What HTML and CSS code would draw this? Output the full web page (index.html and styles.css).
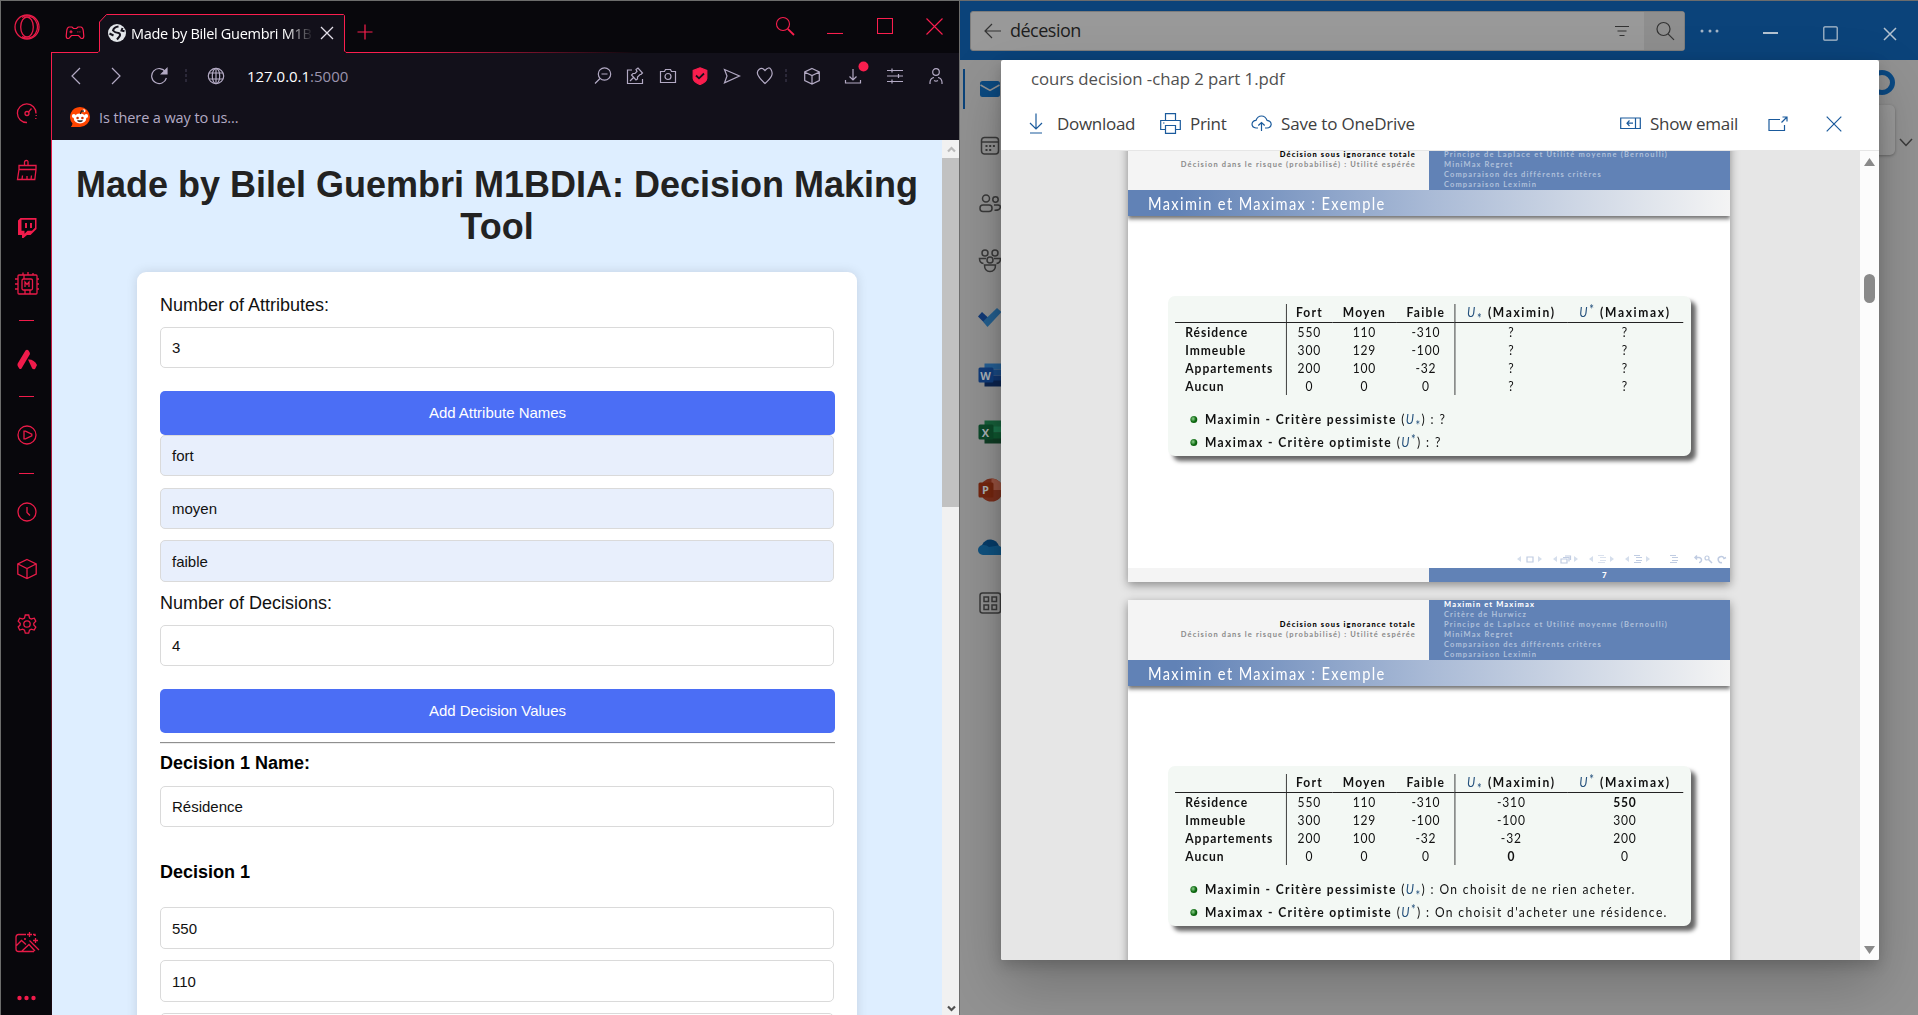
FILE: index.html
```html
<!DOCTYPE html>
<html lang="en">
<head>
<meta charset="utf-8">
<title>Decision Making Tool</title>
<link rel="stylesheet" href="styles.css">
</head>
<body>
<div class="desktop">

<section class="browser">
  <aside class="gx-rail">
    <div class="slot slot-logo"><svg width="26" height="26" viewBox="0 0 26 26"><circle cx="13" cy="13" r="12"/><ellipse cx="13" cy="13" rx="6.3" ry="10"/><path d="M8 3.4C12 .5 19 2 21.5 6.500c2.500 4 2.500 9 0 13C19 24 12 25.500 8 22.600"/></svg></div>
    <div class="slot first"><svg width="24" height="24" viewBox="0 0 24 24"><path d="M12 21.500a9.300 9.300 0 1 1 9-9"/><path d="M21.200 14v1M20.800 17v1"/><circle cx="12" cy="12.500" r="2"/><path d="M13.500 11 16.500 7.500"/></svg></div>
    <div class="slot"><svg width="24" height="24" viewBox="0 0 24 24"><path d="M9.500 7V4q0-1.500 1.800-1.500T13 4v3M4 7.500h17v4H4zM4 11.500 2.500 21.500h17.300l1.200-10M7 21.500l.5-4M12 21.500v-3.500M16 21.500l.5-4"/></svg></div>
    <div class="slot"><svg width="24" height="24" viewBox="0 0 24 24"><path class="solid" d="M3 5.500 5.500 3h16v11l-6 6H12l-3.500 3H7v-3H3zM6.500 4.800v11H9.500v3l3-3H17l3-3V4.800z" fill-rule="evenodd"/><path d="M11 8v5M16 8v5" stroke-width="2"/></svg></div>
    <div class="slot"><svg width="26" height="26" viewBox="0 0 26 26"><rect x="4" y="4" width="19" height="19" rx="1"/><rect x="8" y="8" width="10.500" height="11" rx="1.500"/><path d="M11 16v-5l2 2.500 2-2.500v5M9 4V1.500M14 4V1M19 4V2M1 8h3M1 13h3M1 18h3M23 8h2M23 13h2M23 18h2M10 4v4M11 19v4M16 19v4"/></svg></div>
    <div class="dash"></div>
    <div class="slot tall"><svg width="24" height="24" viewBox="0 0 24 24"><path class="solid" d="M10.500 3.500q1.500-1.500 3 0t1.500 3.500L6.500 21.500q-1 1-2.300 0L2.700 19q-.5-1.500 0-2.500zM13 12.500q6-.5 9 5.500l-1.800 3.700q-1.500 1.300-3-.2z"/></svg></div>
    <div class="dash"></div>
    <div class="slot tall"><svg width="24" height="24" viewBox="0 0 24 24"><circle cx="12" cy="12" r="9"/><path d="M9 8.200v7.600h1.500l6.300-3v-1.600l-6.300-3z"/></svg></div>
    <div class="dash"></div>
    <div class="slot tall"><svg width="24" height="24" viewBox="0 0 24 24"><circle cx="12" cy="12" r="9"/><path d="M12 7v5.500l3 3"/></svg></div>
    <div class="slot cube"><svg width="24" height="24" viewBox="0 0 24 24"><path d="M12 2.500 21.200 7v10L12 21.500 2.800 17V7zM3 7l9 4.500L21 7M12 11.500v10"/></svg></div>
    <div class="slot"><svg width="24" height="24" viewBox="0 0 24 24"><path d="M10.300 3h3.400l.8 3 1.800 1 3-.8 1.500 3-2 2v1.800l2 2-1.600 3-3-.9-1.700 1-.8 3h-3.400l-.8-3-1.800-1-3 .9-1.500-3 2-2v-1.800l-2-2 1.500-3 3 .8 1.800-1z"/><circle cx="12" cy="12" r="3.200"/></svg></div>
    <div class="slot picture"><svg width="26" height="26" viewBox="0 0 26 26"><path d="M12 4.500H4.500Q2 4.500 2 7v12q0 2.500 2.500 2.500H20M2.500 15.500l5-5 4.500 4M8 21l7-6.500 6 6.500M15.500 10.500 25 20M21 6v-.8"/><path d="M15.500 2v5M13 4.500h5M21.500 8v5M19 10.500h5M21 6V4.500h-2"/><circle cx="11" cy="9" r="1" class="solid"/></svg></div>
    <div class="slot more"><svg width="24" height="6" viewBox="0 0 24 6"><g class="solid"><circle cx="4.500" cy="3" r="2.200"/><circle cx="11.500" cy="3" r="2.200"/><circle cx="18.500" cy="3" r="2.200"/></g></svg></div>
  </aside>

  <div class="gx-main">
    <header class="tabs">
      <svg class="tab-outline" width="908" height="52" viewBox="0 0 908 52">
        <defs><linearGradient id="fade" gradientUnits="userSpaceOnUse" x1="0" y1="0" x2="590" y2="0"><stop offset="0" stop-color="#fa1e4e"/><stop offset=".58" stop-color="#fa1e4e"/><stop offset="1" stop-color="#fa1e4e" stop-opacity="0"/></linearGradient></defs>
        <path class="tab-fill" d="M48 52V21l7-7h238v38z"/>
        <path d="M0 51.500h47l1.500-1.500V21l7-7.500h237l1 1V50l1.500 1.500h300" stroke="url(#fade)" fill="none"/>
      </svg>
      <svg width="20" height="16" viewBox="0 0 20 16"><path d="M4 2h3l1.500 1.500h3L13 2h3q2 .5 2.300 4l.5 5q0 2.500-1.800 2.500-1.200 0-2-1.300L13.500 10.500h-7L5 12.200q-.8 1.300-2 1.300-1.800 0-1.800-2.500l.5-5Q2 2.500 4 2zM4.500 6.800h3M6 5.300v3M12.500 6.800h.8M14.500 6.800h.8" /></svg>
      <div class="tab">
        <svg width="20" height="20" viewBox="0 0 20 20"><circle cx="10" cy="10" r="9" fill="#e3e6ea" stroke="none"/><path d="M11.500 3.500Q7 4 6 7.500q2 2.500 5.500 2.500 2.500 1 1 3.500l-2.500 3M15.500 5l-1 2.500 3 .8M2.500 10.500l4 2" stroke="#15131d" stroke-width="2"/></svg>
        <span class="tab-title">Made by Bilel Guembri M1B</span>
        <svg width="14" height="14" viewBox="0 0 14 14"><path d="M1 1l12 12M13 1L1 13" stroke="#e4e0ea" stroke-width="1.300"/></svg>
      </div>
      <svg class="plus" width="16" height="16" viewBox="0 0 16 16"><path d="M8 .5v15M.5 8h15"/></svg>
      <span></span>
      <svg class="win" width="20" height="20" viewBox="0 0 20 20"><circle cx="8" cy="8" r="6.500"/><path d="M12.800 12.800 19 19" stroke-width="1.800"/></svg>
      <svg class="win" width="16" height="16" viewBox="0 0 16 16"><path d="M0 15.500h16"/></svg>
      <svg class="win" width="16" height="16" viewBox="0 0 16 16"><path d="M.5.500h15v15H.5z"/></svg>
      <svg class="win" width="17" height="17" viewBox="0 0 17 17"><path d="M.5.500l16 16M16.500.500l-16 16"/></svg>
    </header>

    <div class="gx-body">
      <nav class="toolbar">
        <svg width="18" height="18" viewBox="0 0 18 18"><path d="M13 1 5 9l8 8"/></svg>
        <svg width="18" height="18" viewBox="0 0 18 18"><path d="M5 1l8 8-8 8"/></svg>
        <svg width="18" height="18" viewBox="0 0 18 18"><path d="M15.500 5A7.500 7.500 0 1 0 16.400 11"/><path d="M17 1.500V7h-5.500z" fill="#b3aac4"/></svg>
        <i class="dots"></i>
        <svg width="18" height="18" viewBox="0 0 18 18"><circle cx="9" cy="9" r="7.700"/><ellipse cx="9" cy="9" rx="3.700" ry="7.700"/><path d="M2 6h14M2 12h14M9 1.500v15"/></svg>
        <span class="address">127.0.0.1<span>:5000</span></span>
        <svg width="18" height="18" viewBox="0 0 18 18"><circle cx="10.500" cy="7" r="6.200"/><path d="M7.500 7h6M6 11.500 1 16.500"/></svg>
        <svg width="18" height="18" viewBox="0 0 18 18"><path d="M6 3H1.500v13.500h15V12M10 2.500 12 1l4.500 5-1.500 1.500-1 0-2.500 2.500v2L10 13 5.500 8 7 6.500l2 .0L11 4.500zM7.500 10.500 4 14"/></svg>
        <svg width="18" height="18" viewBox="0 0 18 18"><path d="M1.500 4.500h4l1-2h5l1 2h4v11h-15z"/><circle cx="9" cy="9.500" r="3"/></svg>
        <svg width="18" height="18" viewBox="0 0 18 18"><path d="M9 .8 15.800 3.500v8Q15.500 15 9 17.600 2.500 15 2.200 11.500v-8z" fill="#fa1e4e" stroke="#fa1e4e"/><path d="M5 8.500 8 11.300 13 6.500" stroke="#12101a" stroke-width="1.800"/></svg>
        <svg width="18" height="18" viewBox="0 0 18 18"><path d="M1.500 2.500 16.500 9 1.500 15.800 4 9z"/></svg>
        <svg width="18" height="18" viewBox="0 0 18 18"><path d="M9 3.500Q6 0 3 2.500T2.500 9Q4 12 9 16.500 14 12 15.500 9T15 2.500 9 3.500z"/></svg>
        <i class="dots"></i>
        <svg width="18" height="18" viewBox="0 0 18 18"><path d="M9 1.500 16.300 5v8.500L9 17l-7.300-3.500V5zM2 5.200l7 3.300 7-3.300M9 8.500V17"/></svg>
        <svg class="download" width="18" height="18" viewBox="0 0 18 18"><path d="M9 2v11M5.500 9.500 9 13l3.500-3.500M1.500 13v3h15v-3"/><circle cx="19.500" cy="-.5" r="5" fill="#fa1e4e" stroke="none"/></svg>
        <svg width="18" height="18" viewBox="0 0 18 18"><path d="M1 3.500h16M1 9h16M1 14.500h16M6 1.500v4M12.500 7v4M6 12.500v4"/></svg>
        <svg width="18" height="18" viewBox="0 0 18 18"><circle cx="9" cy="5" r="3.300"/><path d="M3 17v-2q.5-4 4-4.500M15 17v-2q-.5-4-4-4.500M7 13.500q2 1.200 4 0" /></svg>
      </nav>
      <div class="bookmarks">
        <svg width="20" height="20" viewBox="0 0 20 20"><path d="M10 0a10 10 0 1 1 0 20H.8q1.400-1.500 1.700-3.500A10 10 0 0 1 10 0z" fill="#ff4500" stroke="none"/><g fill="#fff" stroke="none"><ellipse cx="10" cy="11.500" rx="6.200" ry="5"/><circle cx="3.800" cy="9" r="1.900"/><circle cx="16.200" cy="9" r="1.900"/><circle cx="14" cy="3.800" r="1.500"/></g><path d="M10.300 7 11.500 4l2.500.2" stroke="#222"/><circle cx="7.600" cy="11" r="1.300" fill="#d33000" stroke="none"/><circle cx="12.400" cy="11" r="1.300" fill="#d33000" stroke="none"/><path d="M7.500 13.800q2.500 2 5 0z" fill="#222" stroke="#222" stroke-width=".8"/></svg>
        <span>Is there a way to us...</span>
      </div>

      <div class="viewport">
        <main class="page">
          <h1>Made by Bilel Guembri M1BDIA: Decision Making Tool</h1>
          <form class="card">
            <label>Number of Attributes:</label>
            <div class="field">3</div>
            <div class="button">Add Attribute Names</div>
            <div class="field filled">fort</div>
            <div class="field filled">moyen</div>
            <div class="field filled last">faible</div>
            <label>Number of Decisions:</label>
            <div class="field">4</div>
            <div class="button">Add Decision Values</div>
            <hr>
            <label class="strong">Decision 1 Name:</label>
            <div class="field name">Résidence</div>
            <h3>Decision 1</h3>
            <div class="field value">550</div>
            <div class="field value">110</div>
            <div class="field value"></div>
          </form>
        </main>
        <div class="scroll">
          <div class="scroll-up"><svg width="9" height="7" viewBox="0 0 9 7"><path d="M1 5.500 4.500 2 8 5.500" stroke="#b9b9b9" stroke-width="2.200"/></svg></div>
          <div class="scroll-thumb"></div>
          <div class="scroll-down"><svg width="9" height="7" viewBox="0 0 9 7"><path d="M1 1.500 4.500 5 8 1.500" stroke="#505050" stroke-width="2.200"/></svg></div>
        </div>
      </div>
    </div>
  </div>
</section>

<section class="mail">
  <header class="mail-head">
    <div class="search">
      <svg width="18" height="16" viewBox="0 0 18 16"><path d="M17 8H1M8 1 1 8l7 7"/></svg>
      <span>décesion</span>
      <svg width="16" height="12" viewBox="0 0 16 12"><path d="M1 1.500h14M3.500 6h9M5.500 10.500h5"/></svg>
      <div class="search-go"><svg width="20" height="20" viewBox="0 0 20 20"><circle cx="8.500" cy="8" r="6.500"/><path d="M13 12.800l6 6"/></svg></div>
    </div>
    <svg width="20" height="6" viewBox="0 0 20 6"><g fill="#a5b5c6" stroke="none"><circle cx="2" cy="3" r="1.500"/><circle cx="10" cy="3" r="1.500"/><circle cx="17" cy="3" r="1.500"/></g></svg>
    <svg class="min" width="15" height="14" viewBox="0 0 15 14"><path d="M0 7h15" stroke-width="2"/></svg>
    <svg class="max" width="15" height="15" viewBox="0 0 15 15"><rect x=".8" y=".8" width="13.400" height="13.400" rx="1"/></svg>
    <svg class="cls" width="14" height="14" viewBox="0 0 14 14"><path d="M1 1l12 12M13 1 1 13" stroke-width="1.500"/></svg>
  </header>
  <div class="mail-body">
    <nav class="apps">
      <div class="active"><svg width="24" height="24" viewBox="0 0 24 24"><rect x="2" y="4" width="20" height="16" rx="2.500" fill="#0c4a80"/><path d="M2.500 8 12 13.500 21.500 8" stroke="#929292" stroke-width="1.500" fill="none"/></svg></div>
      <div><svg width="24" height="24" viewBox="0 0 24 24" class="line"><rect x="3.500" y="3.500" width="17" height="16.500" rx="3"/><path d="M3.500 8h17"/><path d="M7.500 12h9.500M7.500 16h6" stroke-dasharray="2 1.700" stroke-width="2"/></svg></div>
      <div><svg width="24" height="24" viewBox="0 0 24 24" class="line"><circle cx="8" cy="7.500" r="3.500"/><circle cx="17.500" cy="8.500" r="2.700"/><rect x="2" y="14" width="12" height="6.500" rx="3"/><path d="M16 14h4q2.500 0 2.300 2.500-.8 3-5.800 2.800"/></svg></div>
      <div><svg width="24" height="26" viewBox="0 0 24 26" class="line"><circle cx="7" cy="5" r="3"/><circle cx="17" cy="5" r="3"/><circle cx="12" cy="12" r="3"/><path d="M6.500 17h11q0 6.500-5.500 6.500T6.500 17zM8 10.500H1.500q0 4.500 4 5M16 10.500h6.500q0 4.500-4 5"/></svg></div>
      <div><svg width="26" height="22" viewBox="0 0 26 22"><path d="M1 9.500 5 5l6 5.500L10.500 19z" fill="#123a77"/><path d="M6 14.500 20 1l4.500 4L10.500 20z" fill="#245f8f"/></svg></div>
      <div class="office"><svg width="24" height="24" viewBox="0 0 24 24"><path d="M6.500.500H24v6H6.500z" fill="#265f94"/><path d="M6.500 6.500H24v6H6.500z" fill="#1a4a84"/><path d="M6.500 12.500H24v6H6.500z" fill="#113670"/><path d="M6.500 17.500H24v6H6.500z" fill="#0b244f"/><rect x=".5" y="4.500" width="15" height="15" rx="1.500" fill="#113c7a"/></svg><b>W</b></div>
      <div class="office"><svg width="24" height="24" viewBox="0 0 24 24"><path d="M6.500.500H24v12H6.500z" fill="#17603b"/><path d="M15 6.500h9v6h-9z" fill="#1d754b"/><path d="M6.500 12.500H24v11H6.500z" fill="#103d25"/><path d="M15 12.500h9v6h-9z" fill="#0f5830"/><rect x=".5" y="4.500" width="15" height="15" rx="1.500" fill="#0c4a2a"/></svg><b>X</b></div>
      <div class="office"><svg width="24" height="24" viewBox="0 0 24 24"><circle cx="13.500" cy="12" r="11.500" fill="#7a2f1c"/><path d="M13.500.500A11.500 11.500 0 0 1 25 12H13.500z" fill="#985240"/><rect x=".5" y="4.500" width="15" height="15" rx="1.500" fill="#74260f"/></svg><b>P</b></div>
      <div><svg width="24" height="18" viewBox="0 0 24 18"><path d="M4 7Q7 1 13 1.500t8 7L10 15 3 13z" fill="#063c69"/><path d="M5 17a5 5 0 0 1 0-10q3-.5 6 2l9-1.500Q26 9 25 17z" fill="#0f5280"/></svg></div>
      <div class="grid-app"><svg width="24" height="24" viewBox="0 0 24 24" class="line"><rect x="2" y="2" width="20.500" height="20" rx="2.500"/><path d="M6 6h4.500v4.500H6zM14 6h4.500v4.500H14zM6 14h4.500v4.500H6zM14 14h4.500v4.500H14z"/></svg></div>
    </nav>
    <div class="peek">
      <div class="ring"></div>
      <div class="peek-row"><div class="peek-card"></div><svg width="14" height="9" viewBox="0 0 14 9" class="line"><path d="M1 1l6 6.500L13 1"/></svg></div>
    </div>
  </div>

  <div class="dialog">
    <div class="file-name">cours decision -chap 2 part 1.pdf</div>
    <div class="commands">
      <svg class="c-down" width="14" height="21" viewBox="0 0 14 21"><path d="M7 .5v15M1 10l6 6 6-6M1 20h12"/></svg><span class="t-down">Download</span>
      <svg class="c-print" width="21" height="21" viewBox="0 0 21 21"><path d="M5.500 7.500V.7h10v6.800M5 16.500H.7v-9h19.600v9H16M5.500 12.500h10v7.800h-10zM3 10h1.500"/></svg><span class="t-print">Print</span>
      <svg class="c-save" width="21" height="17" viewBox="0 0 21 17"><path d="M7 13H5q-4-.5-4-4 .5-3.500 4-3.700Q6.500 1 10.500 1t5.500 4.300q4 .5 4.200 4-.5 3.500-4.200 3.700h-2M10.500 16V7.500M7.300 10.500l3.200-3 3.200 3"/></svg><span class="t-save">Save to OneDrive</span>
      <span class="space"></span>
      <svg class="c-show" width="21" height="13" viewBox="0 0 21 13"><path d="M.7 1h19.600v10.500H.7zM15.500 1v10.500M13 6.200H7M9.500 3.500 7 6.200 9.500 9"/></svg><span class="t-show">Show email</span>
      <svg class="c-pop" width="20" height="16" viewBox="0 0 20 16"><path d="M12 3.500H1v11h15.500V9M13.500 6.500 19 1M14.500 1H19v4.500"/></svg>
      <svg class="c-close" width="16" height="16" viewBox="0 0 16 16"><path d="M.7.700l14.600 14.600M15.300.700.7 15.300"/></svg>
    </div>

    <div class="viewer">
      <div class="slides">
        <article class="slide">
          <div class="outline">
            <div class="sections"><p class="on">Décision sous ignorance totale</p><p class="s2">Décision dans le risque (probabilisé) : Utilité espérée</p></div>
            <div class="subs"><p></p><p></p><p class="wide">Principe de Laplace et Utilité moyenne (Bernoulli)</p><p>MiniMax Regret</p><p>Comparaison des différents critères</p><p>Comparaison Leximin</p></div>
          </div>
          <h2><span>Maximin et Maximax : Exemple</span></h2>
          <div class="block">
            <div class="table">
              <b></b><b>Fort</b><b>Moyen</b><b>Faible</b><b><em>U</em><sub>*</sub> (Maximin)</b><b><em>U</em><sup>*</sup> (Maximax)</b>
              <b>Résidence</b><span>550</span><span>110</span><span>-310</span><span>?</span><span>?</span>
              <b>Immeuble</b><span>300</span><span>129</span><span>-100</span><span>?</span><span>?</span>
              <b>Appartements</b><span>200</span><span>100</span><span>-32</span><span>?</span><span>?</span>
              <b>Aucun</b><span>0</span><span>0</span><span>0</span><span>?</span><span>?</span>
            </div>
            <ul>
              <li><b>Maximin - Critère pessimiste</b> (<em>U</em><sub>*</sub>) : ?</li>
              <li><b>Maximax - Critère optimiste</b> (<em>U</em><sup>*</sup>) : ?</li>
            </ul>
          </div>
          <div class="controls"><svg width="214" height="12" viewBox="0 0 214 12">
            <g fill="#d5deec" stroke="none"><path d="M3 6l4-3v6zM28 6l-4-3v6zM39 6l4-3v6zM64 6l-4-3v6zM75 6l4-3v6zM100 6l-4-3v6zM111 6l4-3v6zM136 6l-4-3v6z"/></g>
            <g fill="none" stroke="#c0cce2"><path d="M13 4h6v5h-6zM47 6h6v4h-6zM49 4.500h6v4M51 3h5.500v4"/><path d="M84 2.500h6M86 4.500h6M86 7.500h6M84 9.500h7" stroke="#dbe2ee"/><path d="M120 2.500h6M122 4.500h6M122 7.500h6M120 9.500h7M156 2.500h6M158 4.500h6M158 7.500h6M156 9.500h7"/><path d="M181 4.500h4a2.500 2.500 0 1 1 0 5M183 2.500l-2 2 2 2M208 9.500a3 3 0 1 1 2-4l2-1M194.500 6.500l3.500 3.500" stroke-width="1.500"/><circle cx="193" cy="5" r="2"/></g></svg></div>
          <footer><span></span><span>7</span></footer>
        </article>

        <article class="slide">
          <div class="outline">
            <div class="sections"><p class="on">Décision sous ignorance totale</p><p class="s2">Décision dans le risque (probabilisé) : Utilité espérée</p></div>
            <div class="subs"><p class="on">Maximin et Maximax</p><p>Critère de Hurwicz</p><p class="wide">Principe de Laplace et Utilité moyenne (Bernoulli)</p><p>MiniMax Regret</p><p>Comparaison des différents critères</p><p>Comparaison Leximin</p></div>
          </div>
          <h2><span>Maximin et Maximax : Exemple</span></h2>
          <div class="block">
            <div class="table">
              <b></b><b>Fort</b><b>Moyen</b><b>Faible</b><b><em>U</em><sub>*</sub> (Maximin)</b><b><em>U</em><sup>*</sup> (Maximax)</b>
              <b>Résidence</b><span>550</span><span>110</span><span>-310</span><span>-310</span><span><strong>550</strong></span>
              <b>Immeuble</b><span>300</span><span>129</span><span>-100</span><span>-100</span><span>300</span>
              <b>Appartements</b><span>200</span><span>100</span><span>-32</span><span>-32</span><span>200</span>
              <b>Aucun</b><span>0</span><span>0</span><span>0</span><span><strong>0</strong></span><span>0</span>
            </div>
            <ul>
              <li><b>Maximin - Critère pessimiste</b> (<em>U</em><sub>*</sub>) : On choisit de ne rien acheter.</li>
              <li><b>Maximax - Critère optimiste</b> (<em>U</em><sup>*</sup>) : On choisit d'acheter une résidence.</li>
            </ul>
          </div>
        </article>
      </div>
      <div class="viewer-scroll">
        <svg width="13" height="10" viewBox="0 0 13 10"><path d="M6.500 1 12 9H1z"/></svg>
        <div class="viewer-thumb"></div>
        <svg class="end" width="13" height="10" viewBox="0 0 13 10"><path d="M6.500 9 12 1H1z"/></svg>
      </div>
    </div>
  </div>
</section>

</div>
</body>
</html>
```
FILE: styles.css
```css
* { box-sizing: border-box; }
body { margin: 0; overflow: hidden; background: #929292; }
p, h1, h2, h3, ul { margin: 0; padding: 0; }
svg { display: block; flex: none; fill: none; stroke-width: 1.2; }

.desktop { display: grid; grid-template-columns: 959px 959px; width: 1918px; height: 1015px; overflow: hidden; }

/* Browser window */
.browser {
  display: flex;
  height: 1015px;
  border-top: 1px solid #6c6c6c;
  border-left: 1px solid #6c6c6c;
  background: #08070c;
  overflow: hidden;
  font-family: "Open Sans", "Noto Sans", sans-serif;
  position: relative;
  z-index: 2;
}
.gx-rail { width: 50px; display: flex; flex-direction: column; flex: none; stroke: #e81b48; }
.gx-rail svg { stroke-width: 1.3; margin-left: 1px; }
.gx-rail .solid { fill: #f01b4b; stroke: none; }
.slot { height: 57px; display: flex; align-items: center; justify-content: center; flex: none; }
.slot-logo { height: 51px; }
.first { margin-top: 32.500px; }
.tall { height: 61px; }
.cube { height: 53px; }
.dash { height: 1px; width: 15px; margin: 7px 0 7.5px 18px; background: #f01b4b; flex: none; }
.picture { margin-top: auto; height: 56px; }
.more { height: 44px; padding-top: 10px; }

.gx-main { flex: 1; display: flex; flex-direction: column; min-width: 0; }
.tabs {
  position: relative;
  height: 52px;
  display: grid;
  grid-template-columns: 48px 246px 39px 1fr 50px 50px 50px 49px;
  align-items: center;
  justify-items: center;
  padding-top: 12px;
  stroke: #fa1e4e;
  flex: none;
}
.tabs > svg, .tab { position: relative; }
.tabs .tab-outline { position: absolute; left: 0; top: 0; stroke-width: 1; }
.tab-fill { fill: #12101a; stroke: none; }
.plus { margin-top: -3px; }
.tabs .win { margin-top: -14px; stroke-width: 1.1; }
.tab { display: flex; align-items: center; width: 100%; padding: 0 11px 0 8px; }
.tab-title {
  width: 182px;
  margin: 0 auto 0 4px;
  font-size: 14.500px;
  letter-spacing: -.3px;
  color: #fff;
  white-space: nowrap;
  overflow: hidden;
  -webkit-mask-image: linear-gradient(90deg, #000 155px, transparent 182px);
  mask-image: linear-gradient(90deg, #000 155px, transparent 182px);
}

.gx-body {
  flex: 1;
  display: flex;
  flex-direction: column;
  min-height: 0;
  border-left: 1px solid;
  border-image: linear-gradient(#fa1e4e, #a01838 50%, #1a0810 85%) 1;
  background: #12101a;
}
.toolbar {
  height: 46px;
  display: grid;
  grid-template-columns: 48px 32px 54px 0 60px 1fr repeat(6, 32.400px) 10px repeat(4, 41.500px);
  padding-right: 2px;
  align-items: center;
  justify-items: center;
  stroke: #b3aac4;
  flex: none;
}
.address { justify-self: start; padding-left: 1px; font-size: 15px; letter-spacing: -.02px; color: #fff; }
.address span { color: #9b93ad; }
.dots { width: 2px; height: 14px; background: repeating-linear-gradient(#2b2838 0 3px, transparent 3px 5px); }
.download { overflow: visible; }
.bookmarks { height: 41px; padding: 0 0 5px 18px; display: flex; align-items: center; gap: 9px; color: #b3aac4; font-size: 14.500px; letter-spacing: -.1px; flex: none; }

.viewport { flex: 1; display: flex; min-height: 0; }
.page { width: 890px; background: #deeeff; padding: 24px 0 0; font-family: "Liberation Sans", Arial, sans-serif; overflow: hidden; }
h1 { width: 880px; margin: 0 0 25px 5px; font-size: 36px; line-height: 41.500px; text-align: center; color: #222; }
.card { width: 720px; height: 900px; margin: 0 0 0 85px; padding: 21px 22px 0 23px; background: #fff; border-radius: 9px; box-shadow: 0 0 12px rgba(0, 0, 0, .12); }
label, h3 { display: block; font-size: 18px; line-height: 25px; height: 25px; font-weight: 400; color: #111; }
.field { width: 674px; height: 41px; line-height: 39px; padding-left: 11px; font-size: 15px; color: #111; border: 1px solid #dadada; border-radius: 5px; background: #fff; }
label + .field { margin: 9px 0 23px; }
.button { width: 675px; height: 44px; line-height: 44px; border-radius: 5px; background: #4b6ef5; color: #fff; text-align: center; font-size: 15px; letter-spacing: -.02px; }
.field.filled { background: #e8effc; margin-bottom: 12px; }
.card .field.last { height: 42px; line-height: 41px; margin: -1px 0 9px; }
hr { width: 675px; margin: 9px 0 7px; border: 0; height: 2px; background: linear-gradient(#8f8f8f 50%, #ececec 50%); }
.strong, h3 { font-weight: 700; color: #000; }
.card .field.name { margin: 10px 0 33px; }
h3 { margin-bottom: 22px; }
.value { height: 42px; line-height: 41px; margin-bottom: 11px; }

.scroll { width: 17px; background: #f1f1f1; display: flex; flex-direction: column; }
.scroll-up, .scroll-down { height: 18px; display: flex; align-items: center; justify-content: center; padding-left: 1px; flex: none; }
.scroll-thumb { height: 349px; background: #c1c1c1; }
.scroll-down { margin-top: auto; height: 11px; padding-bottom: 2px; }

/* Mail window, dimmed behind the attachment dialog */
.mail { position: relative; height: 1015px; border-top: 1px solid #6c6c6c; border-left: 1px solid #6c6c6c; background: #929292; overflow: hidden; font-family: "Open Sans", "Noto Sans", sans-serif; }
.mail-head { height: 59px; background: #0b437a; display: flex; align-items: center; padding: 0 21px 0 10px; stroke: #b4c2d0; }
.search { width: 715px; height: 40px; background: #999; border: 1px solid #7d7d7d; border-radius: 3px; display: flex; align-items: center; padding-left: 13px; stroke: #333; margin-right: 15px; }
.search span { font-size: 18px; letter-spacing: -.5px; color: #1e1e1e; margin: 0 auto 2px 8px; }
.search > svg:nth-of-type(2) { margin-right: 14px; }
.search-go { width: 40px; height: 38px; background: #8e8e8e; display: flex; align-items: center; justify-content: center; padding-left: 1px; }
.min { margin: 5px 0 0 43px; }
.max { margin: 5px 0 0 45px; }
.cls { margin: 6px 0 0 auto; }
.mail-body { display: flex; justify-content: space-between; }
.apps { width: 60px; }
.apps > div { position: relative; height: 57.300px; display: flex; align-items: center; justify-content: center; }
.apps .grid-app { height: 54px; }
.apps svg { stroke: none; }
.apps .line, .line { stroke: #3a3a3a; stroke-width: 1.500; }
.active::before { content: ""; position: absolute; left: 3px; top: 9px; width: 2px; height: 40px; background: #0b437a; }
.office b { position: absolute; left: 18px; width: 15px; text-align: center; font-size: 11px; line-height: 15px; color: #a9b0b5; }
.peek { width: 76px; padding-top: 10px; }
.ring { width: 26px; height: 25px; border: 5px solid #0b4a84; border-radius: 50%; margin-left: 27px; }
.peek-row { display: flex; align-items: center; gap: 4px; margin-top: 10px; }
.peek-card { width: 53px; height: 50px; background: #999; border-radius: 5px; box-shadow: 0 1px 3px rgba(0, 0, 0, .3); }
.peek-row svg { margin-top: 24px; }

.dialog {
  position: absolute;
  left: 41px;
  top: 59px;
  width: 878px;
  height: 900px;
  display: flex;
  flex-direction: column;
  background: #fff;
  border-radius: 2px;
  overflow: hidden;
  box-shadow: 0 25px 58px rgba(0, 0, 0, .22), 0 5px 14px rgba(0, 0, 0, .18);
}
.file-name { padding-left: 30px; height: 38px; line-height: 38px; font-size: 16.800px; letter-spacing: -.05px; color: #505050; flex: none; }
.commands { height: 53px; padding: 0 37px 1px 28px; display: flex; align-items: center; border-bottom: 1px solid #e6e6e6; stroke: #1a5a9c; font-size: 17px; letter-spacing: -.3px; color: #404040; white-space: nowrap; flex: none; }
.commands .space { flex: 1; }
.t-down { width: 78px; margin: 0 25px 0 14px; }
.t-print { width: 37px; margin: 0 24px 0 9px; }
.t-save { margin-left: 9px; letter-spacing: -.18px; }
.t-show { width: 88px; margin: 0 30px 0 9px; }
.c-close { margin-left: 38px; }

.viewer { flex: 1; display: flex; background: #e6e6e6; min-height: 0; }
.slides { flex: 1; padding-left: 127px; overflow: hidden; }
.slide { width: 602px; height: 452px; background: #fff; box-shadow: 0 3px 9px rgba(0, 0, 0, .4); margin-bottom: 18px; display: flex; flex-direction: column; font-family: Lato, "Open Sans", sans-serif; color: #111; }
.slide:first-child { margin-top: -21px; }
.outline { height: 60px; display: grid; grid-template-columns: 301px 301px; font-size: 7.500px; line-height: 10px; font-weight: 700; letter-spacing: 1.13px; white-space: nowrap; flex: none; }
.outline p { height: 10px; }
.sections { background: #f4f4f4; color: #8a8a8a; text-align: right; padding: 20px 13px 0 0; }
.sections .on { color: #000; font-weight: 900; }
.subs { background: #6182b6; color: #b0c1db; padding: 0 0 0 15px; }
.subs .wide { letter-spacing: 1.2px; }
.subs .on { color: #fff; font-weight: 900; }
h2 { height: 26px; line-height: 27px; padding-left: 20px; background: linear-gradient(90deg, #6182b6 8%, #a9bad6 50%, #f4f4f4); color: #fff; font-size: 17px; font-weight: 400; letter-spacing: 1.6px; white-space: nowrap; box-shadow: 0 3px 4px rgba(0, 0, 0, .55); clip-path: inset(0 0 -8px 0); flex: none; }
/* The lecture notes are set in a condensed sans: glyphs are narrowed, then tracked out */
h2 span { display: inline-block; transform: scaleX(.86); transform-origin: left; }
.block { width: 523px; height: 160px; margin: 80px 0 0 40px; padding: 8px 7px 0; background: #f3f8f4; border-radius: 7px; box-shadow: 5px 5px 4px rgba(0, 0, 0, .6); font-size: 14px; letter-spacing: 1px; flex: none; }
.table { display: grid; width: 590.700px; grid-template-columns: 129px 53.500px 75.600px 67.400px 130.200px 135px; grid-template-rows: 19px 18px 18px 18px 18px; text-align: center; line-height: 17px; white-space: nowrap; transform: scaleX(.86); transform-origin: left; }
.table > :nth-child(6n+1) { text-align: left; padding-left: 12px; letter-spacing: 1.1px; }
.table > :nth-child(6n+2), .table > :nth-child(6n+5) { border-left: 1px solid #222; }
.table > :nth-child(-n+6) { border-bottom: 1px solid #222; line-height: 16px; letter-spacing: 1.4px; }
.table > :nth-child(5), .table > :nth-child(6) { letter-spacing: 1.9px; }
em, sub, sup { font-weight: 400; color: #24507c; }
sub, sup { font-size: 13px; line-height: 0; }
sub { vertical-align: -6px; }
sup { vertical-align: 3px; }
ul { list-style: none; padding: 12px 0 0 30px; }
li { position: relative; height: 23px; line-height: 23px; white-space: nowrap; letter-spacing: 1.6px; transform: scaleX(.86); transform-origin: left; }
li::before { content: ""; position: absolute; left: -17px; top: 9px; width: 8px; height: 7px; border-radius: 50%; background: radial-gradient(circle at 40% 40%, #8fd08f, #0c6a10 50%, #064a08); }
.controls { margin-top: auto; padding: 0 2px 3px 0; display: flex; justify-content: flex-end; }
.slide footer { height: 14px; display: grid; grid-template-columns: 301px 301px; background: #f4f4f4; flex: none; }
.slide footer span:last-child { background: #6182b6; color: #fff; font: 900 8px/14px Lato, sans-serif; padding-left: 173px; }
.viewer-scroll { width: 19px; background: #fcfcfc; padding: 6px 0 5px 3px; display: flex; flex-direction: column; }
.viewer-scroll svg { fill: #8a8a8a; stroke: none; }
.viewer-thumb { width: 11px; height: 29px; border-radius: 6px; background: #8a8a8a; margin: 107px 0 0 1px; }
.end { margin-top: auto; }
```
